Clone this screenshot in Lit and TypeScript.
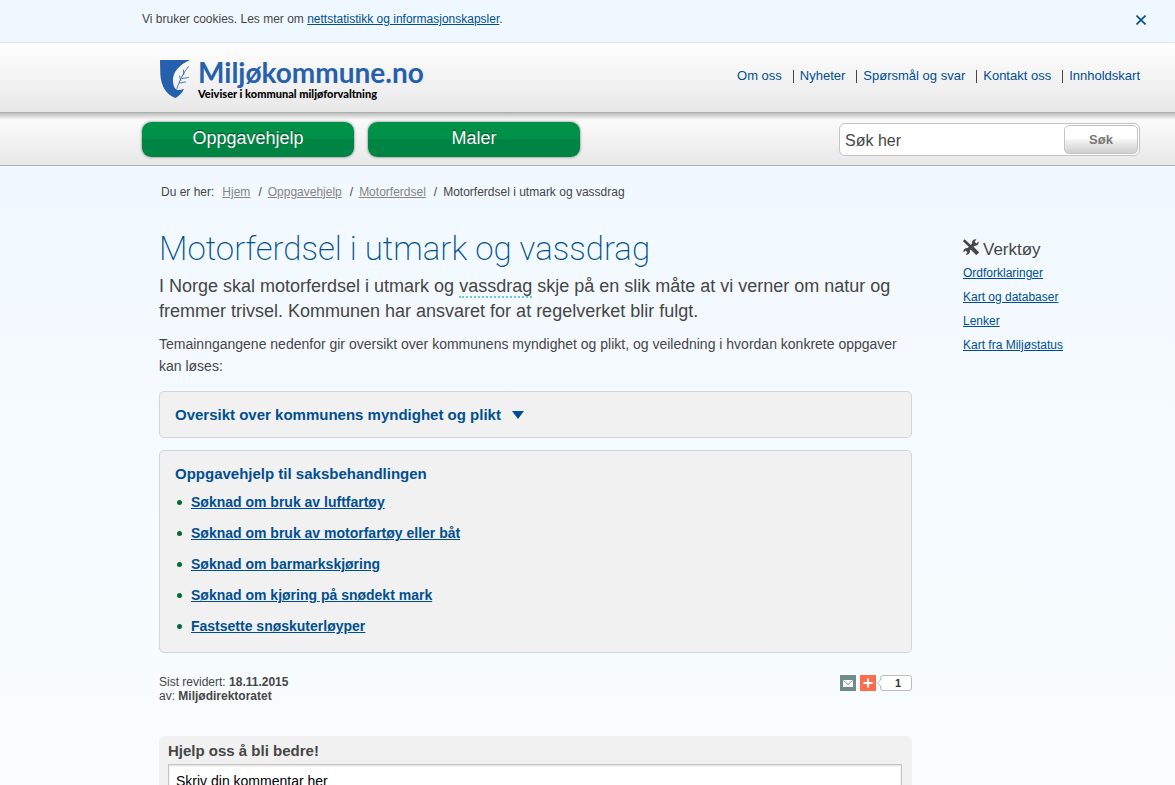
import { LitElement, html, css, svg } from "lit";
import { customElement, state } from "lit/decorators.js";

const topLinks = ["Om oss", "Nyheter", "Spørsmål og svar", "Kontakt oss", "Innholdskart"];
const crumbs = ["Hjem", "Oppgavehjelp", "Motorferdsel"];
const tools = ["Ordforklaringer", "Kart og databaser", "Lenker", "Kart fra Miljøstatus"];
const tasks = [
  "Søknad om bruk av luftfartøy",
  "Søknad om bruk av motorfartøy eller båt",
  "Søknad om barmarkskjøring",
  "Søknad om kjøring på snødekt mark",
  "Fastsette snøskuterløyper",
];

const shield = svg`
  <path fill="#2560ad" d="M0 0H30C21 4 12 11 13 22C13.200 26 15 29 17.500 30C19.500 30.300 22 29.500 24 29C22 33 18.500 36.500 15.500 38C6 34.500 1 26 .3 14Z"/>
  <g fill="none" stroke="#2560ad" stroke-width=".8" stroke-linecap="round">
    <path d="M17 28.500C19 22 22.500 14 28.500 6.500"/>
    <path d="M23.800 14.500L23.500 10M20.800 20.500L19.500 16M22 18.500L28.500 17.500M19.500 23L25.500 22"/>
  </g>`;

const wrench = svg`
  <g fill="none" stroke="#464646" stroke-linecap="butt">
    <path stroke-width="3.200" d="M4 12L12 4"/>
    <path stroke-width="2.600" d="M.8 1.200L8 8"/>
    <path stroke-width="4" d="M9 9L14.800 14.800"/>
  </g>
  <path fill="#464646" d="M9 4C8.800 1.500 11 -.2 13.500.4L11.600 2.600L13.200 4.400L15.600 2.500C16.200 5.200 13.800 7.400 11 6.800Z
    M7 12C7.200 14.500 5 16.200 2.500 15.600L4.400 13.400L2.800 11.600L.4 13.500C-.2 10.800 2.200 8.600 5 9.200Z"/>`;

@customElement("app-root")
export class AppRoot extends LitElement {
  @state() private showCookies = true;

  static styles = css`
    :host {
      display: block;
      height: 100vh;
      overflow-y: auto;
      scrollbar-width: none;
      color: #464646;
      background: linear-gradient(#eff7ff, #f9fdff);
      font-family: "Liberation Sans", Arial, sans-serif;
      font-size: 12px;
    }
    * { box-sizing: border-box; }
    a { color: #004f91; }
    h1, h2, p, ul { margin: 0; padding: 0; }
    ul { list-style: none; }
    button, input, textarea { font-family: inherit; margin: 0; }

    .row {
      display: flex;
      justify-content: space-between;
      padding: 0 35px 0 142px;
    }
    .cookies {
      height: 43px;
      align-items: flex-start;
      padding-top: 11px;
      padding-right: 28px;
      line-height: 16px;
      background: #f0f8ff;
      border-bottom: 1px solid #dfe7ee;
    }
    .close {
      display: flex;
      width: 12px;
      height: 18px;
      padding: 0;
      border: 0;
      background: none;
      align-items: center;
      justify-content: center;
      cursor: pointer;
    }
    .header {
      height: 70px;
      align-items: flex-start;
      background: linear-gradient(#fff, #e8e8e8);
      border-bottom: 1px solid #adadad;
    }
    .brand {
      display: flex;
      gap: 8px;
      padding: 17px 0 0 18px;
      text-decoration: none;
      font-family: Lato, sans-serif;
    }
    .brand-text { display: flex; flex-direction: column; }
    .brand-name {
      color: #2560ad;
      font-size: 28px;
      line-height: 24px;
      font-weight: 700;
    }
    .brand-tag {
      color: #000;
      font-size: 11px;
      line-height: 20px;
      font-weight: 900;
    }
    .top-links {
      display: flex;
      padding-top: 25px;
      font-size: 13px;
      line-height: 16px;
    }
    .top-links li + li {
      margin-left: 11px;
      padding-left: 7px;
      background: linear-gradient(#464646, #464646) left center / 1px 13px no-repeat;
    }
    .top-links a { text-decoration: none; }

    .nav {
      height: 53px;
      padding-top: 9px;
      background:
        linear-gradient(#bdbdbd, rgba(240, 240, 240, 0)) top / 100% 7px no-repeat,
        linear-gradient(#fdfdfd, #e8e8e8);
      border-bottom: 1px solid #adadad;
    }
    .nav-buttons { display: flex; gap: 14px; }
    .nav-buttons a {
      width: 212px;
      height: 35px;
      border-radius: 9px;
      background: linear-gradient(#009149 50%, #008444 50%);
      box-shadow: 0 0 2px 1px rgba(0, 0, 0, .25);
      color: #fff;
      font-size: 18px;
      line-height: 32px;
      text-align: center;
      text-decoration: none;
      text-shadow: 0 -1px 1px rgba(0, 0, 0, .5);
    }
    .search {
      display: flex;
      width: 301px;
      height: 33px;
      margin-top: 1px;
      padding: 1px;
      background: #fff;
      border: 1px solid #c4c4c4;
      border-radius: 6px;
    }
    .search input {
      flex: 1;
      min-width: 0;
      padding: 2px 4px 0;
      border: 0;
      outline: 0;
      background: none;
      color: #464646;
      font-size: 16px;
    }
    .search button {
      width: 74px;
      border: 1px solid #c4c4c4;
      border-radius: 5px;
      background: linear-gradient(#fff 45%, #f0f0f0 55%, #cfcfcf);
      color: #777;
      font-size: 13px;
      font-weight: bold;
    }

    .crumbs {
      display: flex;
      padding: 18px 35px 0 161px;
      line-height: 16px;
    }
    .crumbs span, .crumbs a { margin-right: 8px; }
    .crumbs a { color: #858585; }
    .crumbs .slash { margin-right: 6px; }

    .page {
      display: grid;
      grid-template-columns: minmax(0, 1fr) 177px;
      gap: 51px;
      padding: 29px 35px 0 159px;
    }
    h1 {
      color: #004f91;
      font-family: Roboto, sans-serif;
      font-size: 33px;
      line-height: 40px;
      font-weight: 200;
    }
    .lead {
      margin-top: 5px;
      font-size: 18px;
      line-height: 25px;
    }
    .term { border-bottom: 2px dotted #6cc4e6; }
    .intro {
      margin-top: 9px;
      font-size: 14px;
      line-height: 22px;
    }
    .box {
      margin-top: 12px;
      padding: 13px 15px 12px;
      border: 1px solid #d5d5d5;
      border-radius: 5px;
      background: #f1f1f1;
    }
    .intro + .box { margin-top: 14px; }
    .box h2 {
      color: #004f91;
      font-size: 15px;
      line-height: 20px;
    }
    .toggle {
      display: flex;
      align-items: center;
      gap: 11px;
      padding: 0;
      border: 0;
      background: none;
      color: inherit;
      font: inherit;
      cursor: pointer;
    }
    .tasks { padding-bottom: 4px; }
    .tasks li {
      display: flex;
      align-items: center;
      gap: 9px;
      margin-top: 11px;
      font-size: 14px;
      line-height: 20px;
      font-weight: bold;
    }
    .tasks li:first-child { margin-top: 8px; }
    .tasks li::before {
      content: "";
      width: 5px;
      height: 5px;
      margin-left: 2px;
      border-radius: 50%;
      background: #006c3c;
    }
    .meta {
      display: flex;
      justify-content: space-between;
      margin-top: 22px;
      line-height: 14px;
    }
    .share { display: flex; gap: 4px; height: 16px; }
    .share button {
      width: 16px;
      height: 16px;
      padding: 0;
      border: 0;
      background: #708b8b;
    }
    .share svg { display: block; }
    .share .plus { background: #ff6d4c; }
    .count { position: relative; }
    .count span {
      display: block;
      width: 32px;
      height: 16px;
      border: 1px solid #bdbdbd;
      border-radius: 3px;
      background: #fff;
      color: #333;
      font-size: 11px;
      line-height: 14px;
      font-weight: bold;
      text-align: center;
      padding-left: 4px;
    }
    .count svg { position: absolute; left: -3px; top: 4px; }
    .feedback {
      margin-top: 33px;
      padding: 5px 10px 10px 9px;
      border-radius: 6px;
      background: #f1f1f1;
    }
    .feedback label {
      display: block;
      font-size: 15px;
      line-height: 20px;
      font-weight: bold;
    }
    .feedback textarea {
      display: block;
      width: 100%;
      height: 90px;
      margin-top: 3px;
      padding: 7px;
      border: 1px solid #c4c4c4;
      background: #fff;
      box-shadow: inset 0 1px 2px #ddd;
      color: #000;
      font-size: 14px;
      line-height: 18px;
      resize: none;
    }
    .tools h2 {
      display: flex;
      gap: 4px;
      padding-top: 9px;
      font-size: 17px;
      line-height: 23px;
      font-weight: normal;
    }
    .tools h2 svg { margin-top: 1px; }
    .tools li { line-height: 24px; }
  `;

  render() {
    return html`
      ${this.showCookies
        ? html`<div class="row cookies">
            <p>Vi bruker cookies. Les mer om <a href="#">nettstatistikk og informasjonskapsler</a>.</p>
            <button class="close" aria-label="Lukk" @click=${() => (this.showCookies = false)}>
              <svg width="10" height="10" viewBox="0 0 10 10">
                <path d="M.5.5L9.500 9.500M9.500.5L.5 9.500" stroke="#004f91" stroke-width="1.600" />
              </svg>
            </button>
          </div>`
        : null}
      <header class="row header">
        <a class="brand" href="#">
          <svg width="30" height="38" viewBox="0 0 30 38">${shield}</svg>
          <span class="brand-text">
            <span class="brand-name">Miljøkommune.no</span>
            <span class="brand-tag">Veiviser i kommunal miljøforvaltning</span>
          </span>
        </a>
        <ul class="top-links">
          ${topLinks.map((t) => html`<li><a href="#">${t}</a></li>`)}
        </ul>
      </header>
      <div class="row nav">
        <nav class="nav-buttons">
          <a href="#">Oppgavehjelp</a>
          <a href="#">Maler</a>
        </nav>
        <form class="search" @submit=${(e: Event) => e.preventDefault()}>
          <input type="text" aria-label="Søk her" .value=${"Søk her"} />
          <button type="submit">Søk</button>
        </form>
      </div>
      <nav class="crumbs">
        <span>Du er her:</span>
        ${crumbs.map((c) => html`<a href="#">${c}</a><span class="slash">/</span>`)}
        <span>Motorferdsel i utmark og vassdrag</span>
      </nav>
      <div class="page">
        <main>
          <h1>Motorferdsel i utmark og vassdrag</h1>
          <p class="lead">
            I Norge skal motorferdsel i utmark og <span class="term">vassdrag</span> skje på en slik måte at
            vi verner om natur og fremmer trivsel. Kommunen har ansvaret for at regelverket blir fulgt.
          </p>
          <p class="intro">
            Temainngangene nedenfor gir oversikt over kommunens myndighet og plikt, og veiledning i hvordan
            konkrete oppgaver kan løses:
          </p>
          <section class="box">
            <h2>
              <button class="toggle">
                Oversikt over kommunens myndighet og plikt
                <svg width="12" height="8" viewBox="0 0 12 8"><path fill="#004f91" d="M0 0H12L6 8Z" /></svg>
              </button>
            </h2>
          </section>
          <section class="box">
            <h2>Oppgavehjelp til saksbehandlingen</h2>
            <ul class="tasks">
              ${tasks.map((t) => html`<li><a href="#">${t}</a></li>`)}
            </ul>
          </section>
          <div class="meta">
            <p>Sist revidert: <b>18.11.2015</b><br />av: <b>Miljødirektoratet</b></p>
            <div class="share">
              <button aria-label="E-post">
                <svg width="16" height="16" viewBox="0 0 16 16">
                  <rect x="3" y="5" width="10" height="7" fill="#fff" />
                  <path d="M3.500 5.500L8 9.500L12.500 5.500" fill="none" stroke="#708b8b" />
                </svg>
              </button>
              <button class="plus" aria-label="Del">
                <svg width="16" height="16" viewBox="0 0 16 16">
                  <path d="M8 3.500V12.500M3.500 8H12.500" stroke="#fff" stroke-width="2" />
                </svg>
              </button>
              <div class="count">
                <span>1</span>
                <svg width="5" height="8" viewBox="0 0 5 8">
                  <path d="M4.500 0L.5 4L4.500 8" fill="#fff" stroke="#bdbdbd" />
                </svg>
              </div>
            </div>
          </div>
          <section class="feedback">
            <label for="comment">Hjelp oss å bli bedre!</label>
            <textarea id="comment" .value=${"Skriv din kommentar her"}></textarea>
          </section>
        </main>
        <aside class="tools">
          <h2><svg width="16" height="16" viewBox="0 0 16 16">${wrench}</svg>Verktøy</h2>
          <ul>
            ${tools.map((t) => html`<li><a href="#">${t}</a></li>`)}
          </ul>
        </aside>
      </div>
    `;
  }
}
